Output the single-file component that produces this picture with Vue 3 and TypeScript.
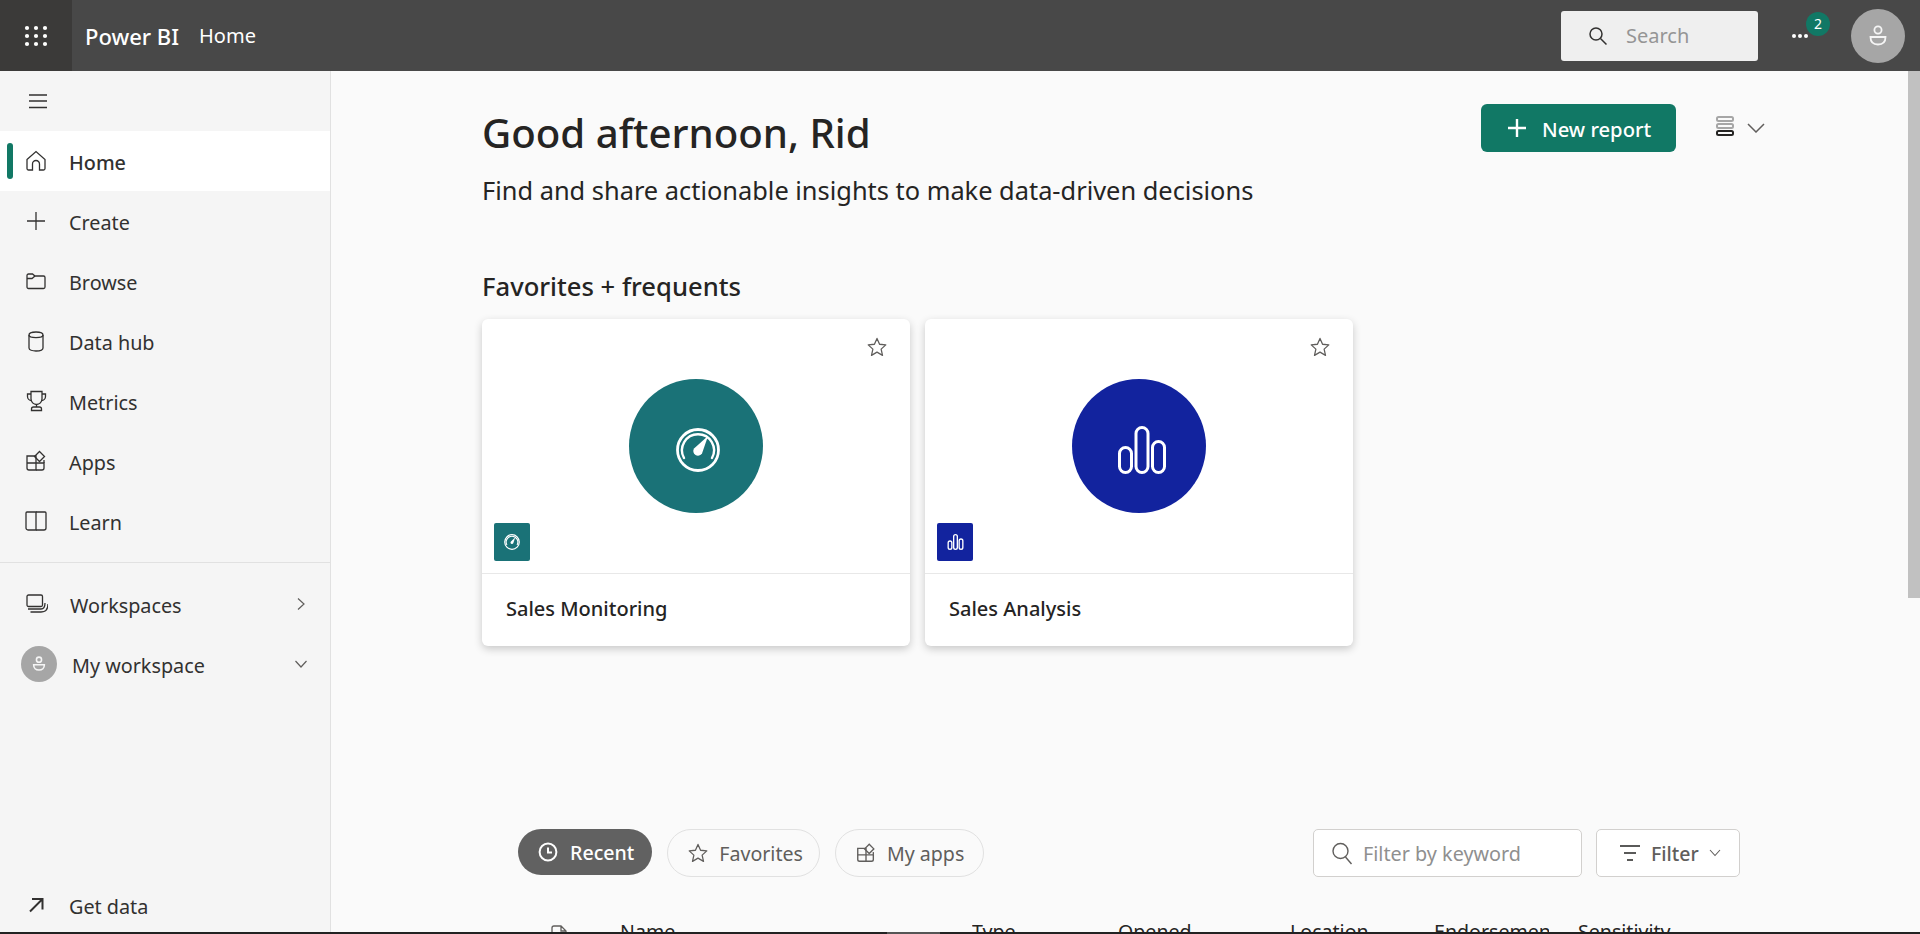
<template>
  <div class="app">
    <header class="topbar">
      <div class="waffle">
        <svg width="24" height="22" viewBox="0 0 24 22" fill="#fff">
          <template v-for="y in [3, 11, 19]" :key="y">
            <circle v-for="x in [3, 12, 21]" :key="x" :cx="x" :cy="y" r="2.1" />
          </template>
        </svg>
      </div>
      <span class="brand">Power BI</span>
      <span class="crumb">Home</span>
      <div class="search">
        <svg width="20" height="20" viewBox="0 0 20 20" fill="none" stroke="#323130" stroke-width="1.5">
          <circle cx="8" cy="8" r="6" />
          <path d="M12.5 12.5 L18.5 18.5" />
        </svg>
        <span>Search</span>
      </div>
      <div class="more">
        <span class="dots">
          <i /><i /><i />
        </span>
        <span class="badge">2</span>
      </div>
      <div class="avatar avatar-lg">
        <svg width="28" height="28" viewBox="0 0 28 28" fill="none" stroke="#f5f5f5" stroke-width="1.8">
          <circle cx="14" cy="8" r="3.6" />
          <path d="M6.5 15 H21.5 C21.5 20 18.5 22.5 14 22.5 C9.5 22.5 6.5 20 6.5 15 Z" />
        </svg>
      </div>
    </header>

    <div class="body">
      <aside class="sidebar">
        <div class="burger">
          <svg width="20" height="16" viewBox="0 0 20 16" stroke="#323130" stroke-width="1.3">
            <path d="M1 2 H19 M1 8 H19 M1 14.5 H19" />
          </svg>
        </div>
        <nav>
          <a
            v-for="item in navItems"
            :key="item.label"
            class="nav-row"
            :class="{ active: item.active }"
          >
            <svg class="nav-icon" width="24" height="24" viewBox="0 0 24 24" fill="none" stroke="#323130" stroke-width="1.3">
              <path v-for="d in item.paths" :key="d" :d="d" />
            </svg>
            <span>{{ item.label }}</span>
          </a>
        </nav>
        <div class="divider" />
        <a class="ws-row">
          <svg class="nav-icon" width="24" height="24" viewBox="0 0 24 24" fill="none" stroke="#323130" stroke-width="1.3">
            <path d="M4.5 3 H17 a1.5 1.5 0 0 1 1.5 1.5 V13 a1.5 1.5 0 0 1 -1.5 1.5 H4.5 A1.5 1.5 0 0 1 3 13 V4.5 A1.5 1.5 0 0 1 4.5 3 Z" />
            <path d="M4 17 H17 C20 17 21 15 21 11" />
            <path d="M6.5 20 H17 C22 20 24 17 24 12" />
          </svg>
          <span class="ws-label">Workspaces</span>
          <svg class="ws-chevron" width="12" height="14" viewBox="0 0 12 14" fill="none" stroke="#605e5c" stroke-width="1.2">
            <path d="M3 1.5 L9 7 L3 12.5" />
          </svg>
        </a>
        <a class="ws-row my-ws">
          <div class="avatar avatar-sm">
            <svg width="20" height="20" viewBox="0 0 28 28" fill="none" stroke="#f5f5f5" stroke-width="2.2">
              <circle cx="14" cy="8" r="3.6" />
              <path d="M6.5 15 H21.5 C21.5 20 18.5 22.5 14 22.5 C9.5 22.5 6.5 20 6.5 15 Z" />
            </svg>
          </div>
          <span class="ws-label">My workspace</span>
          <svg class="ws-chevron down" width="14" height="12" viewBox="0 0 14 12" fill="none" stroke="#605e5c" stroke-width="1.2">
            <path d="M1.5 3 L7 9 L12.5 3" />
          </svg>
        </a>
        <a class="get-data">
          <svg class="nav-icon" width="24" height="24" viewBox="0 0 24 24" fill="none" stroke="#323130" stroke-width="2">
            <path d="M6 18.5 L18 6.5 M8 6 H18.5 V16.5" />
          </svg>
          <span>Get data</span>
        </a>
      </aside>

      <main class="main">
        <div class="hero">
          <div class="hero-text">
            <h1>Good afternoon, Rid</h1>
            <p>Find and share actionable insights to make data-driven decisions</p>
          </div>
          <div class="hero-actions">
            <button class="new-report">
              <svg width="20" height="20" viewBox="0 0 20 20" stroke="#fff" stroke-width="2.4">
                <path d="M10 1 V19 M1 10 H19" />
              </svg>
              <span>New report</span>
            </button>
            <svg class="density" width="20" height="24" viewBox="0 0 20 22" fill="none" stroke-width="2">
              <rect x="2" y="2" width="16" height="4" rx="1.5" stroke="#a6a6a6" />
              <rect x="2" y="9" width="16" height="4" rx="1.5" stroke="#a6a6a6" />
              <rect x="2" y="16" width="16" height="4" rx="1.5" stroke="#252423" />
            </svg>
            <svg width="18" height="10" viewBox="0 0 18 10" fill="none" stroke="#605e5c" stroke-width="1.5">
              <path d="M1 1 L9 9 L17 1" />
            </svg>
          </div>
        </div>

        <h2>Favorites + frequents</h2>
        <div class="cards">
          <article v-for="card in cards" :key="card.title" class="card">
            <div class="thumb">
              <svg class="star" width="22" height="22" viewBox="0 0 24 24" fill="none" stroke="#605e5c" stroke-width="1.4" stroke-linejoin="round">
                <path :d="starPath" />
              </svg>
              <div class="circle" :style="{ background: card.color }">
                <svg
                  v-if="card.kind === 'gauge'"
                  class="big-gauge"
                  width="44"
                  height="44"
                  viewBox="0 0 44 44"
                  fill="none"
                  stroke="#fff"
                >
                  <circle cx="22" cy="22" r="20.5" stroke-width="2.8" />
                  <path d="M8 30 A16 16 0 1 1 36 30" stroke-width="2.4" stroke-linecap="round" />
                  <path d="M32 8 L26 25.5 A4.4 4.4 0 0 1 18 20.5 Z" fill="#fff" stroke="none" />
                </svg>
                <svg
                  v-else
                  class="big-bars"
                  width="48"
                  height="48"
                  viewBox="0 0 48 48"
                  fill="none"
                  stroke="#fff"
                  stroke-width="3"
                >
                  <rect x="1.5" y="21.5" width="12" height="25" rx="6" />
                  <rect x="18" y="1.5" width="12" height="45" rx="6" />
                  <rect x="34.5" y="15.5" width="12" height="31" rx="6" />
                </svg>
              </div>
              <div class="tile" :style="{ background: card.color }">
                <svg v-if="card.kind === 'gauge'" width="16" height="16" viewBox="0 0 44 44" fill="none" stroke="#fff">
                  <circle cx="22" cy="22" r="20" stroke-width="3.4" />
                  <path d="M8 30 A16 16 0 1 1 36 30" stroke-width="3" />
                  <path d="M31 9 L25.5 25.5 A4 4 0 0 1 18.5 21 Z" fill="#fff" stroke="none" />
                </svg>
                <svg v-else width="17" height="16" viewBox="0 0 48 48" fill="none" stroke="#fff" stroke-width="4">
                  <rect x="2" y="21" width="11" height="25" rx="5.5" />
                  <rect x="18.5" y="2" width="11" height="44" rx="5.5" />
                  <rect x="35" y="15" width="11" height="31" rx="5.5" />
                </svg>
              </div>
            </div>
            <div class="card-title">{{ card.title }}</div>
          </article>
        </div>

        <div class="toolbar">
          <div class="pills">
            <button class="pill pill-on">
              <svg width="20" height="20" viewBox="0 0 20 20" fill="none" stroke="#fff" stroke-width="2">
                <circle cx="10" cy="10" r="8.4" />
                <path d="M10 5.5 V10.5 H14" />
              </svg>
              Recent
            </button>
            <button class="pill pill-fav">
              <svg width="22" height="22" viewBox="0 0 24 24" fill="none" stroke="#605e5c" stroke-width="1.4" stroke-linejoin="round">
                <path :d="starPath" />
              </svg>
              Favorites
            </button>
            <button class="pill">
              <svg width="22" height="22" viewBox="0 0 24 24" fill="none" stroke="#605e5c" stroke-width="1.5">
                <path v-for="d in appsPaths" :key="d" :d="d" />
              </svg>
              My apps
            </button>
          </div>
          <div class="filters">
            <div class="keyword">
              <svg width="24" height="24" viewBox="0 0 24 24" fill="none" stroke="#605e5c" stroke-width="1.4">
                <circle cx="10.5" cy="10" r="7.5" />
                <path d="M15.5 16 L21.5 23" />
              </svg>
              <span>Filter by keyword</span>
            </div>
            <button class="filter-btn">
              <svg width="22" height="18" viewBox="0 0 22 18" stroke="#252423" stroke-width="1.6">
                <path d="M1 2 H21 M5 9 H17 M8 16 H14" />
              </svg>
              <span>Filter</span>
              <svg width="12" height="8" viewBox="0 0 12 8" fill="none" stroke="#605e5c" stroke-width="1.1">
                <path d="M1 1 L6 6.5 L11 1" />
              </svg>
            </button>
          </div>
        </div>

        <div class="table-head">
          <svg width="18" height="22" viewBox="0 0 18 22" fill="none" stroke="#605e5c" stroke-width="1.3">
            <path d="M2 20 V3 a2 2 0 0 1 2 -2 H11 L16 6 V20 Z M11 1 V6 H16" />
          </svg>
          <span v-for="col in columns" :key="col">{{ col }}</span>
        </div>

        <div class="scrollbar" />
      </main>
    </div>

    <div class="taskbar-edge">
      <span class="edge-thumb" />
    </div>
  </div>
</template>

<script setup lang="ts">
interface NavItem {
  label: string
  paths: string[]
  active?: boolean
}

interface Card {
  title: string
  color: string
  kind: 'gauge' | 'bars'
}

const appsPaths = [
  'M3 7 H12 V21 H5 a2 2 0 0 1 -2 -2 Z',
  'M3 14 H20 V19 a2 2 0 0 1 -2 2 H12',
  'M15.5 2.5 L20.5 7.5 L15.5 12.5 L10.5 7.5 Z',
  'M20 11 V14',
]

const starPath =
  'M12 2.6 L14.8 9 L21.6 9.7 L16.5 14.3 L18 21.1 L12 17.6 L6 21.1 L7.5 14.3 L2.4 9.7 L9.2 9 Z'

const navItems: NavItem[] = [
  {
    label: 'Home',
    active: true,
    paths: ['M3 10.5 L12 2.5 L21 10.5 V19.5 a1.5 1.5 0 0 1 -1.5 1.5 H15.5 V15 a3.5 3.5 0 0 0 -7 0 V21 H4.5 A1.5 1.5 0 0 1 3 19.5 Z'],
  },
  { label: 'Create', paths: ['M12 3 V21 M3 12 H21'] },
  {
    label: 'Browse',
    paths: ['M3 6.5 a1.5 1.5 0 0 1 1.5 -1.5 H8.5 L11 7 H19.5 a1.5 1.5 0 0 1 1.5 1.5 V18 a1.5 1.5 0 0 1 -1.5 1.5 H4.5 A1.5 1.5 0 0 1 3 18 Z', 'M3 9.5 H8 L11 7'],
  },
  {
    label: 'Data hub',
    paths: ['M5 6 C5 2 19 2 19 6 V19 C19 23 5 23 5 19 Z', 'M5 6 C5 9.5 19 9.5 19 6'],
  },
  {
    label: 'Metrics',
    paths: [
      'M7 2.5 H18 V10 a5.5 5.5 0 0 1 -11 0 Z',
      'M7 5 H3.5 V7.5 a4 4 0 0 0 4 4 M18 5 H21.5 V7.5 a4 4 0 0 1 -4 4',
      'M12.5 15.5 V18',
      'M7.5 21.5 V20 a2 2 0 0 1 2 -2 H15.5 a2 2 0 0 1 2 2 V21.5 Z',
    ],
  },
  { label: 'Apps', paths: appsPaths },
  {
    label: 'Learn',
    paths: ['M2 4 a1 1 0 0 1 1 -1 H12 V21 H4 a2 2 0 0 1 -2 -2 Z', 'M12 3 H21 a1 1 0 0 1 1 1 V19 a2 2 0 0 1 -2 2 H12'],
  },
]

const cards: Card[] = [
  { title: 'Sales Monitoring', color: '#1a7277', kind: 'gauge' },
  { title: 'Sales Analysis', color: '#12239e', kind: 'bars' },
]

const columns = ['Name', 'Type', 'Opened', 'Location', 'Endorsement', 'Sensitivity']
</script>

<style>
html,
body {
  margin: 0;
  overflow: hidden;
}
</style>

<style scoped>
.app {
  display: flex;
  flex-direction: column;
  height: 934px;
  overflow: hidden;
  font-family: "Noto Sans", "Open Sans", sans-serif;
  color: #252423;
  background: #fafafa;
}

.topbar {
  display: flex;
  align-items: center;
  flex: 0 0 71px;
  background: #484848;
  color: #fff;
}

.waffle {
  display: flex;
  align-items: center;
  justify-content: center;
  align-self: stretch;
  width: 72px;
  background: #3b3a39;
}

.brand {
  margin-left: 13px;
  font-size: 22px;
  font-weight: 500;
}

.crumb {
  margin-left: 20px;
  font-size: 20px;
}

.search {
  display: flex;
  align-items: center;
  gap: 18px;
  width: 197px;
  height: 50px;
  box-sizing: border-box;
  margin-left: auto;
  padding-left: 27px;
  border-radius: 3px;
  background: #efefef;
  color: #959595;
  font-size: 20px;
}

.more {
  position: relative;
  width: 68px;
  height: 50px;
  margin-left: 26px;
}

.dots {
  position: absolute;
  left: 8px;
  top: 23px;
  display: flex;
  gap: 2px;
}

.dots i {
  width: 4px;
  height: 4px;
  border-radius: 50%;
  background: #fff;
}

.badge {
  position: absolute;
  left: 22px;
  top: 1px;
  width: 24px;
  height: 24px;
  border-radius: 50%;
  background: #117865;
  font-size: 14px;
  line-height: 24px;
  text-align: center;
}

.avatar {
  display: flex;
  align-items: center;
  justify-content: center;
  border-radius: 50%;
  background: #a6a6a6;
}

.avatar-lg {
  width: 54px;
  height: 54px;
  margin: 0 15px 0 -1px;
}

.avatar-sm {
  width: 36px;
  height: 36px;
  flex: none;
}

.body {
  display: flex;
  flex: 1;
  min-height: 0;
}

.sidebar {
  display: flex;
  flex-direction: column;
  flex: 0 0 330px;
  border-right: 1px solid #e1e1e1;
  background: #f5f5f5;
  color: #323130;
  font-size: 19.8px;
}

.burger {
  display: flex;
  align-items: center;
  height: 60px;
  padding-left: 28px;
}

.nav-row {
  position: relative;
  display: flex;
  align-items: center;
  gap: 21px;
  height: 60px;
  padding-left: 24px;
}

.nav-row span,
.ws-row span,
.get-data span {
  padding-top: 2px;
}

.nav-row.active {
  background: #fff;
  font-weight: 500;
}

.nav-row.active::before {
  content: "";
  position: absolute;
  left: 7px;
  top: 12px;
  width: 6px;
  height: 36px;
  border-radius: 3px;
  background: #117865;
}

.nav-icon {
  flex: none;
}

.divider {
  height: 1px;
  margin-top: 11px;
  background: #e1e1e1;
}

.ws-row {
  display: flex;
  align-items: center;
  height: 60px;
  margin-top: 11px;
  padding-left: 24px;
}

.ws-row .ws-label {
  margin-left: 22px;
}

.my-ws {
  margin-top: 0;
  padding-left: 21px;
}

.my-ws .ws-label {
  margin-left: 15px;
}

.ws-chevron {
  margin-left: auto;
  margin-right: 23px;
}

.ws-chevron.down {
  margin-right: 22px;
}

.get-data {
  display: flex;
  align-items: center;
  gap: 21px;
  height: 54px;
  margin-top: auto;
  padding: 0 0 0 24px;
}

.main {
  position: relative;
  flex: 1;
  min-width: 0;
  padding: 33px 0 0 151px;
  overflow: hidden;
}

.hero {
  display: flex;
  justify-content: space-between;
  align-items: flex-start;
  width: 1283px;
}

.hero h1 {
  margin: 1px 0 0;
  font-size: 40.2px;
  font-weight: 500;
  line-height: 56px;
}

.hero p {
  margin: 13px 0 0;
  font-size: 25.4px;
  line-height: 32px;
}

.hero-actions {
  display: flex;
  align-items: center;
}

.new-report {
  display: flex;
  align-items: center;
  gap: 15px;
  width: 195px;
  height: 48px;
  box-sizing: border-box;
  padding: 0 0 0 26px;
  border: 0;
  border-radius: 6px;
  background: #117865;
  color: #fff;
  font: 500 20.2px "Noto Sans", sans-serif;
}

.new-report span {
  padding-top: 2px;
}

.density {
  margin: -4px 12px 0 39px;
}

.main h2 {
  margin: 65px 0 16px;
  font-size: 25.6px;
  font-weight: 500;
  line-height: 32px;
}

.cards {
  display: flex;
  gap: 15px;
}

.card {
  width: 428px;
  height: 327px;
  border-radius: 6px;
  background: #fff;
  box-shadow: 0 3px 9px rgba(0, 0, 0, 0.2);
  overflow: hidden;
}

.thumb {
  position: relative;
  display: flex;
  align-items: center;
  justify-content: center;
  height: 255px;
  border-bottom: 1px solid #e8e8e8;
  box-sizing: border-box;
}

.star {
  position: absolute;
  top: 17px;
  right: 22px;
}

.circle {
  display: flex;
  align-items: center;
  justify-content: center;
  width: 134px;
  height: 134px;
  border-radius: 50%;
}

.big-gauge {
  margin: 8px 0 0 4px;
}

.big-bars {
  margin: 7px 0 0 6px;
}

.tile {
  position: absolute;
  left: 12px;
  top: 204px;
  display: flex;
  align-items: center;
  justify-content: center;
  width: 36px;
  height: 38px;
  border-radius: 2px;
}

.card-title {
  padding-left: 24px;
  font-size: 20px;
  font-weight: 500;
  line-height: 70px;
}

.toolbar {
  display: flex;
  justify-content: space-between;
  width: 1222px;
  margin: 183px 0 0 36px;
}

.pills,
.filters {
  display: flex;
  align-items: flex-start;
}

.pills {
  gap: 15px;
}

.pill {
  display: flex;
  align-items: center;
  gap: 10px;
  height: 48px;
  padding: 0 19px;
  border: 1px solid #e1e1e1;
  border-radius: 24px;
  background: transparent;
  color: #605e5c;
  font: 400 19.6px "Noto Sans", sans-serif;
}

.pill-on {
  height: 46px;
  padding: 0 18px 0 20px;
  gap: 12px;
  border: 0;
  background: #616161;
  color: #fff;
  font-weight: 500;
}

.pill-fav {
  padding-right: 16px;
}

.keyword {
  display: flex;
  align-items: center;
  gap: 9px;
  width: 269px;
  height: 48px;
  box-sizing: border-box;
  padding-left: 16px;
  border: 1px solid #d2d0ce;
  border-radius: 5px;
  background: #fff;
  color: #8f8f8f;
  font-size: 19.8px;
}

.filter-btn {
  display: flex;
  align-items: center;
  width: 144px;
  height: 48px;
  box-sizing: border-box;
  margin-left: 14px;
  padding-left: 22px;
  border: 1px solid #d2d0ce;
  border-radius: 5px;
  background: #fff;
  color: #605e5c;
  font: 500 19.5px "Noto Sans", sans-serif;
}

.filter-btn span {
  margin: 0 10px 0 10px;
}

.table-head {
  display: grid;
  grid-template-columns: 70px 352px 146px 172px 144px 144px 140px;
  align-items: start;
  height: 24px;
  margin: 43px 0 0 68px;
  font-size: 19.6px;
  line-height: 24px;
  white-space: nowrap;
}

.table-head svg {
  margin-top: 5px;
}

.table-head span {
  overflow: hidden;
  margin-right: 29px;
}

.scrollbar {
  position: absolute;
  top: 0;
  right: 0;
  width: 12px;
  height: 527px;
  background: #c1c1c1;
}

.taskbar-edge {
  position: relative;
  flex: 0 0 2px;
  background: #222;
}

.edge-thumb {
  position: absolute;
  left: 887px;
  top: 0;
  width: 53px;
  height: 2px;
  background: #555;
}
</style>
